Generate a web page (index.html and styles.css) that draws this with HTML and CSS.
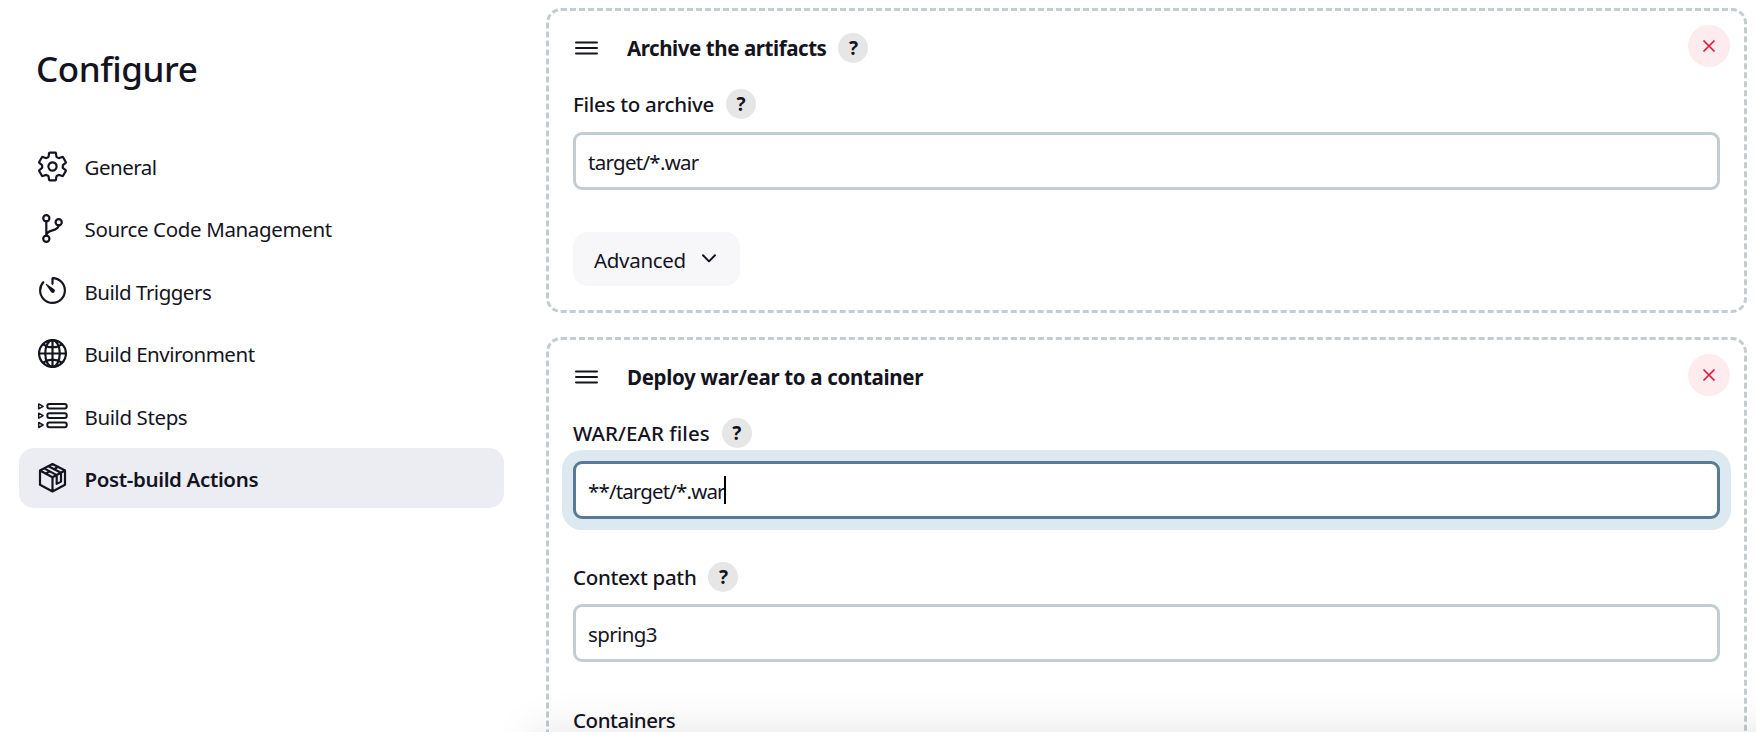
FILE: index.html
```html
<!DOCTYPE html>
<html lang="en">
<head>
<meta charset="utf-8">
<title>Configure</title>
<link rel="stylesheet" href="styles.css">
</head>
<body>
<div class="page">
  <aside class="sidebar">
    <h1 class="title"><span>Configure</span></h1>
    <nav class="nav">
      <a class="nav-item"><svg class="icon" viewBox="0 0 512 512"><path d="M262.29 192.31a64 64 0 1057.4 57.4 64.13 64.13 0 00-57.4-57.4zM416.39 256a154.34 154.34 0 01-1.53 20.79l45.21 35.46a10.81 10.81 0 012.45 13.75l-42.77 74a10.81 10.81 0 01-13.14 4.59l-44.9-18.08a16.11 16.11 0 00-15.17 1.75A164.48 164.48 0 01325 400.8a15.94 15.94 0 00-8.82 12.14l-6.73 47.89a11.08 11.08 0 01-10.68 9.17h-85.54a11.11 11.11 0 01-10.69-8.87l-6.72-47.82a16.07 16.07 0 00-9-12.22 155.3 155.3 0 01-21.46-12.57 16 16 0 00-15.11-1.71l-44.89 18.07a10.81 10.81 0 01-13.14-4.58l-42.77-74a10.8 10.8 0 012.45-13.75l38.21-30a16.05 16.05 0 006-14.08c-.36-4.17-.58-8.33-.58-12.5s.21-8.27.58-12.35a16 16 0 00-6.07-13.94l-38.19-30A10.81 10.81 0 0149.48 186l42.77-74a10.81 10.81 0 0113.14-4.59l44.9 18.08a16.11 16.11 0 0015.17-1.75A164.48 164.48 0 01187 111.2a15.94 15.94 0 008.82-12.14l6.73-47.89A11.08 11.08 0 01213.23 42h85.54a11.11 11.11 0 0110.69 8.87l6.72 47.82a16.07 16.07 0 009 12.22 155.3 155.3 0 0121.46 12.57 16 16 0 0015.11 1.71l44.89-18.07a10.81 10.81 0 0113.14 4.58l42.77 74a10.8 10.8 0 01-2.45 13.75l-38.21 30a16.05 16.05 0 00-6.05 14.08c.33 4.14.55 8.3.55 12.47z"/></svg><span class="t-general">General</span></a>
      <a class="nav-item"><svg class="icon" viewBox="0 0 512 512"><circle cx="160" cy="96" r="48"/><circle cx="160" cy="416" r="48"/><circle cx="352" cy="160" r="48"/><path d="M160 368V144M352 208c-4 44-28 60-96 78s-96 36-96 82"/></svg><span class="t-scm">Source Code Management</span></a>
      <a class="nav-item"><svg class="icon" viewBox="0 0 512 512"><path d="M112.91 128A191.85 191.85 0 0064 254c-1.18 106.35 85.65 193.8 192 194 106.2.2 192-85.83 192-192 0-104.54-83.55-189.61-187.5-192a4.36 4.36 0 00-4.5 4.37V152"/><path class="solid" d="M233.38 278.63l-79-113a8.13 8.13 0 0111.32-11.32l113 79a32.5 32.5 0 01-37.25 53.26 33.21 33.21 0 01-8.07-7.94z"/></svg><span class="t-trig">Build Triggers</span></a>
      <a class="nav-item"><svg class="icon" viewBox="0 0 512 512"><circle cx="256" cy="256" r="208"/><ellipse cx="256" cy="256" rx="112.67" ry="208"/><path d="M117.33 117.33c38.24 27.15 86.38 43.34 138.67 43.34s100.43-16.19 138.67-43.34M394.67 394.67c-38.24-27.15-86.38-43.34-138.67-43.34s-100.43 16.19-138.67 43.34M256 48v416M464 256H48"/></svg><span class="t-env">Build Environment</span></a>
      <a class="nav-item"><svg class="icon thin" viewBox="0 0 33 33"><rect x="11.3" y="5" width="19.400" height="4.600" rx="2"/><rect x="11.3" y="14.3" width="19.400" height="4.600" rx="2"/><rect x="11.3" y="23.6" width="19.400" height="4.600" rx="2"/><path d="M2.700 4.900l4.400 2.500-4.400 2.500zM2.700 14.200l4.400 2.500-4.400 2.500zM2.700 23.500l4.400 2.500-4.400 2.500z"/></svg><span class="t-steps">Build Steps</span></a>
      <a class="nav-item active"><svg class="icon cube" viewBox="0 0 33 33"><path d="M16.500 3L29 9.500v14.300L16.500 30.500 4 23.800V9.500zM4 9.500l12.500 6.800L29 9.500M16.500 16.300v14M8.200 7.400l12.500 6.700v8.800l4.300-2.300v-8.900L12.400 5.200M9.600 12.600l3.600-2M17.800 8.200l4.400-2.300"/></svg><span class="t-post">Post-build Actions</span></a>
    </nav>
  </aside>

  <main class="main">
    <section class="card">
      <header class="card-head">
        <svg class="handle" viewBox="0 0 23 14"><path d="M1 1.500h21M1 7h21M1 12.500h21"/></svg>
        <h2 class="card-title t-arch">Archive the artifacts</h2>
        <span class="help">?</span>
        <button class="close"><svg viewBox="0 0 14 14"><path d="M1.500 1.500l11 11M12.500 1.500l-11 11"/></svg></button>
      </header>
      <div class="label"><span class="t-files">Files to archive</span><span class="help">?</span></div>
      <div class="input"><span class="t-target">target/*.war</span></div>
      <button class="advanced"><span class="t-adv">Advanced</span><svg viewBox="0 0 14 9"><path d="M1 1.200l6 6.200 6-6.200"/></svg></button>
    </section>

    <section class="card">
      <header class="card-head">
        <svg class="handle" viewBox="0 0 23 14"><path d="M1 1.500h21M1 7h21M1 12.500h21"/></svg>
        <h2 class="card-title t-deploy">Deploy war/ear to a container</h2>
        <button class="close"><svg viewBox="0 0 14 14"><path d="M1.500 1.500l11 11M12.500 1.500l-11 11"/></svg></button>
      </header>
      <div class="label"><span class="t-war">WAR/EAR files</span><span class="help">?</span></div>
      <div class="input focused"><span class="t-star">**/target/*.war</span><i class="caret"></i></div>
      <div class="label later"><span class="t-ctx">Context path</span><span class="help">?</span></div>
      <div class="input"><span class="t-spring">spring3</span></div>
      <div class="label last"><span class="t-cont">Containers</span></div>
    </section>
  </main>
  <div class="fade"><div class="bottom-bar"></div></div>
</div>
</body>
</html>
```
FILE: styles.css
```css
* { box-sizing: border-box; }
body {
  margin: 0;
  background: #fff;
  color: #14141f;
  font-family: "Noto Sans", "Open Sans", sans-serif;
  font-size: 20.5px;
  line-height: 30px;
  white-space: nowrap;
}
.page {
  position: relative;
  display: flex;
  width: 1756px;
  height: 741px;
  overflow: hidden;
}
.sidebar { width: 546px; padding: 0 42px 0 19px; }
.title {
  margin: 0;
  padding: 45px 0 0 17px;
  height: 136px;
  font-size: 35px;
  line-height: 48px;
  font-weight: 500;
  letter-spacing: -.45px;
}
.nav { display: flex; flex-direction: column; gap: 2.4px; }
.nav-item {
  display: flex;
  align-items: center;
  height: 60px;
  padding-left: 17px;
  gap: 15.5px;
  border-radius: 15px;
}
.nav-item span { padding-top: 2px; }
.nav-item.active { background: #ecedf3; font-weight: 600; }
.icon {
  width: 33px;
  height: 33px;
  fill: none;
  stroke: #14141f;
  stroke-width: 34;
  stroke-linecap: round;
  stroke-linejoin: round;
}
.icon .solid { fill: #14141f; stroke: none; }
.icon.thin { stroke-width: 2; }
.icon.thin path { stroke-width: 1.5; }
.icon.cube { stroke-width: 2.2; }

/* Tracking per text run */
.t-general { letter-spacing: -.5px; }
.t-scm { letter-spacing: -.36px; }
.t-trig { letter-spacing: -.5px; }
.t-env { letter-spacing: -.48px; }
.t-steps { letter-spacing: -.4px; }
.t-post { letter-spacing: -.35px; }
.t-arch { letter-spacing: -.43px; }
.t-deploy { letter-spacing: -.33px; }
.t-files { letter-spacing: -.29px; }
.t-war { letter-spacing: .06px; }
.t-ctx { letter-spacing: -.3px; }
.t-cont { letter-spacing: -.45px; }
.t-target { letter-spacing: -.72px; }
.t-star { letter-spacing: -.85px; }
.t-adv { letter-spacing: -.3px; }
.t-spring { letter-spacing: -.6px; }

.main {
  width: 1201px;
  padding-top: 8px;
  display: flex;
  flex-direction: column;
  gap: 24px;
}
.card {
  flex: none;
  border: 3px dashed #c3ccd1;
  border-radius: 15px;
  padding: 14px 24px 24px;
}
.card + .card { height: 480px; }
.card-head { display: flex; align-items: center; height: 46px; margin-right: -10px; }
.handle {
  width: 23px;
  height: 14px;
  margin: -1px 0 0 2px;
  stroke: #14141f;
  stroke-width: 2;
  stroke-linecap: round;
}
.card-title { margin: 0 0 0 29px; font-size: 20.5px; line-height: 30px; font-weight: 700; }
.help {
  display: flex;
  align-items: center;
  justify-content: center;
  width: 30px;
  height: 30px;
  margin-left: 12px;
  border-radius: 50%;
  background: #e6e6e6;
  font-size: 19px;
  font-weight: 700;
  letter-spacing: 0;
}
.close {
  display: flex;
  align-items: center;
  justify-content: center;
  width: 42px;
  height: 42px;
  margin: -4px 0 0 auto;
  padding: 0;
  border: 0;
  border-radius: 50%;
  background: #fdebed;
}
.close svg { width: 14px; height: 14px; fill: none; stroke: #e6173a; stroke-width: 1.7; }
.label { display: flex; align-items: center; height: 30px; margin: 18px 0 13px; font-weight: 500; }
.input {
  display: flex;
  align-items: center;
  height: 58px;
  padding: 1px 12px 0;
  border: 3px solid #c3ccd1;
  border-radius: 9px;
  background: #fff;
}
.input.focused { border-color: #587b91; box-shadow: 0 0 0 11px #dce9f1; }
.caret { width: 2px; height: 28px; margin: -1px 0 0 -1px; background: #000; }
.label.later { margin: 43px 0 12px; }
.label.last { margin-top: 43px; }
.advanced {
  display: flex;
  align-items: center;
  gap: 16px;
  width: 167px;
  height: 54px;
  margin-top: 42px;
  padding: 1px 0 0 21px;
  border: 0;
  border-radius: 15px;
  background: #f7f7fa;
  color: #14141f;
  font: inherit;
}
.advanced svg { width: 14px; height: 9px; margin-top: -3px; fill: none; stroke: #14141f; stroke-width: 2; stroke-linecap: round; stroke-linejoin: round; }

/* Soft shadow cast by the sticky bar at the bottom edge */
.fade { position: absolute; inset: 0; overflow: hidden; pointer-events: none; }
.bottom-bar {
  position: absolute;
  left: 532px;
  right: -80px;
  top: 732px;
  height: 90px;
  background: #fff;
  box-shadow: 0 0 45px rgba(0, 0, 0, .11);
}
.fade::after { content: ""; position: absolute; left: 0; right: 0; bottom: 0; height: 9px; background: #fff; }
```
